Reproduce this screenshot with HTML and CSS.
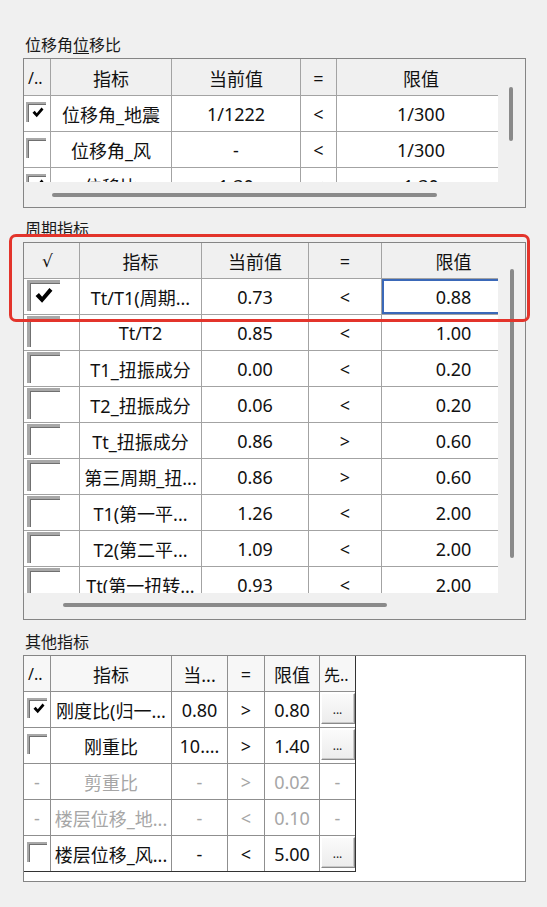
FILE: index.html
```html
<!DOCTYPE html>
<html lang="zh-CN">
<head>
<meta charset="utf-8">
<title>指标</title>
<link rel="stylesheet" href="styles.css">
</head>
<body>
<section class="group">
  <div class="title">位移角<span class="ul">位</span>移比</div>
  <div class="box box1">
    <div class="main t1">
      <div class="row head">
        <div class="c left">/..</div><div class="c">指标</div><div class="c">当前值</div><div class="c">=</div><div class="c">限值</div>
      </div>
      <div class="body">
        <div class="row">
          <div class="c cbc"><div class="cb"><svg width="12" height="11" viewBox="0 0 16 15"><path d="M0.5 8 L3.5 5.2 L6.3 8.6 L12.8 0.8 L15.5 3.3 L6.3 14 Z" fill="#000"/></svg></div></div>
          <div class="c">位移角_地震</div><div class="c">1/1222</div><div class="c">&lt;</div><div class="c">1/300</div>
        </div>
        <div class="row">
          <div class="c cbc"><div class="cb"></div></div>
          <div class="c">位移角_风</div><div class="c">-</div><div class="c">&lt;</div><div class="c">1/300</div>
        </div>
        <div class="row">
          <div class="c cbc"><div class="cb"><svg width="12" height="11" viewBox="0 0 16 15"><path d="M0.5 8 L3.5 5.2 L6.3 8.6 L12.8 0.8 L15.5 3.3 L6.3 14 Z" fill="#000"/></svg></div></div>
          <div class="c">位移比</div><div class="c">1.30</div><div class="c">&lt;</div><div class="c">1.30</div>
        </div>
      </div>
    </div>
    <div class="vscroll"><div class="thumb v1"></div></div>
    <div class="hscroll"><div class="thumb h1"></div></div>
  </div>
</section>

<section class="group g2">
  <div class="title">周期指标</div>
  <div class="box box2">
    <div class="main t2">
      <div class="row head">
        <div class="c root">√</div><div class="c">指标</div><div class="c">当前值</div><div class="c">=</div><div class="c">限值</div>
      </div>
      <div class="body">
        <div class="row">
          <div class="c cbc"><div class="cb big"><svg width="18" height="17" viewBox="0 0 16 15"><path d="M0.5 8 L3.5 5.2 L6.3 8.6 L12.8 0.8 L15.5 3.3 L6.3 14 Z" fill="#000"/></svg></div></div>
          <div class="c">Tt/T1(周期...</div><div class="c">0.73</div><div class="c">&lt;</div><div class="c focus">0.88</div>
        </div>
        <div class="row">
          <div class="c cbc"><div class="cb big"></div></div>
          <div class="c">Tt/T2</div><div class="c">0.85</div><div class="c">&lt;</div><div class="c">1.00</div>
        </div>
        <div class="row">
          <div class="c cbc"><div class="cb big"></div></div>
          <div class="c">T1_扭振成分</div><div class="c">0.00</div><div class="c">&lt;</div><div class="c">0.20</div>
        </div>
        <div class="row">
          <div class="c cbc"><div class="cb big"></div></div>
          <div class="c">T2_扭振成分</div><div class="c">0.06</div><div class="c">&lt;</div><div class="c">0.20</div>
        </div>
        <div class="row">
          <div class="c cbc"><div class="cb big"></div></div>
          <div class="c">Tt_扭振成分</div><div class="c">0.86</div><div class="c">&gt;</div><div class="c">0.60</div>
        </div>
        <div class="row">
          <div class="c cbc"><div class="cb big"></div></div>
          <div class="c">第三周期_扭...</div><div class="c">0.86</div><div class="c">&gt;</div><div class="c">0.60</div>
        </div>
        <div class="row">
          <div class="c cbc"><div class="cb big"></div></div>
          <div class="c">T1(第一平...</div><div class="c">1.26</div><div class="c">&lt;</div><div class="c">2.00</div>
        </div>
        <div class="row">
          <div class="c cbc"><div class="cb big"></div></div>
          <div class="c">T2(第二平...</div><div class="c">1.09</div><div class="c">&lt;</div><div class="c">2.00</div>
        </div>
        <div class="row">
          <div class="c cbc"><div class="cb big"></div></div>
          <div class="c">Tt(第一扭转...</div><div class="c">0.93</div><div class="c">&lt;</div><div class="c">2.00</div>
        </div>
      </div>
    </div>
    <div class="vscroll"><div class="thumb v2"></div></div>
    <div class="hscroll"><div class="thumb h2"></div></div>
  </div>
</section>

<section class="group g3">
  <div class="title">其他指标</div>
  <div class="box box3">
    <div class="t3">
      <div class="row head">
        <div class="c left">/..</div><div class="c">指标</div><div class="c">当...</div><div class="c">=</div><div class="c">限值</div><div class="c left">先..</div>
      </div>
      <div class="row">
        <div class="c cbc"><div class="cb"><svg width="12" height="11" viewBox="0 0 16 15"><path d="M0.5 8 L3.5 5.2 L6.3 8.6 L12.8 0.8 L15.5 3.3 L6.3 14 Z" fill="#000"/></svg></div></div>
        <div class="c">刚度比(归一...</div><div class="c">0.80</div><div class="c">&gt;</div><div class="c">0.80</div><div class="c btnc"><div class="btn">...</div></div>
      </div>
      <div class="row">
        <div class="c cbc"><div class="cb"></div></div>
        <div class="c">刚重比</div><div class="c">10....</div><div class="c">&gt;</div><div class="c">1.40</div><div class="c btnc"><div class="btn">...</div></div>
      </div>
      <div class="row dis">
        <div class="c">-</div>
        <div class="c">剪重比</div><div class="c">-</div><div class="c">&gt;</div><div class="c">0.02</div><div class="c">-</div>
      </div>
      <div class="row dis">
        <div class="c">-</div>
        <div class="c">楼层位移_地...</div><div class="c">-</div><div class="c">&lt;</div><div class="c">0.10</div><div class="c">-</div>
      </div>
      <div class="row last">
        <div class="c cbc"><div class="cb"></div></div>
        <div class="c">楼层位移_风...</div><div class="c">-</div><div class="c">&lt;</div><div class="c">5.00</div><div class="c btnc"><div class="btn">...</div></div>
      </div>
    </div>
  </div>
</section>

<div class="mark"></div>
</body>
</html>
```

FILE: styles.css
```css
* { box-sizing: border-box; }

html, body { margin: 0; }

body {
  background: #f0f0f0;
  padding: 33px 21px 0 23px;
  font-family: "Noto Sans", "Noto Sans CJK SC", sans-serif;
  color: #111;
  width: 547px;
  height: 907px;
  overflow: hidden;
}

.title {
  height: 22px;
  line-height: 22px;
  font-family: "Noto Sans CJK SC", sans-serif;
  font-size: 16px;
  padding-left: 2px;
  margin-bottom: 3px;
  color: #1a1a1a;
}

.ul { text-decoration: underline; text-underline-offset: 2px; }

.g2 { margin-top: 9px; }
.g3 { margin-top: 10px; }

.box {
  border: 1px solid #858585;
  background: #f0f0f0;
  display: grid;
  grid-template-columns: 474px 1fr;
  overflow: hidden;
}

.box1 { height: 150px; grid-template-rows: 123px 1fr; }
.box2 { height: 378px; grid-template-rows: 350px 1fr; }
.box3 { height: 227px; background: #fff; display: block; }

.main { overflow: hidden; display: flex; flex-direction: column; }
.body { background: #fff; flex: 1; overflow: hidden; }

.row { display: grid; height: 36px; border-bottom: 1px solid #a3a3a3; }
.t1 .row { grid-template-columns: 27px 121px 129px 36px 169px; width: 482px; }
.t1 .head { height: 37px; }
.t2 .row { grid-template-columns: 56px 122px 107px 73px 144px; width: 502px; }
.t3 .row { grid-template-columns: 27px 121px 56px 37px 55px 35px; width: 331px; border-bottom-color: #8f8f8f; }
.t3 .row.last { border-bottom-color: #333; }
.t3 { border-right: 1px solid #333; width: 332px; }

.head { background: #f0f0f0; }
.t3 .head { background: #f7f7f7; }

.c {
  border-right: 1px solid #a3a3a3;
  display: flex;
  align-items: center;
  justify-content: center;
  font-size: 18px;
  white-space: nowrap;
  overflow: hidden;
  padding-top: 1px;
}
.t3 .c { border-right-color: #8f8f8f; }
.t3 .c:last-child { border-right: none; }

.c.left { justify-content: flex-start; padding-left: 4px; font-size: 16px; }
.c.root { font-family: "DejaVu Sans", sans-serif; font-size: 17px; padding-right: 8px; }

.cbc { align-items: flex-start; justify-content: flex-start; padding: 6px 0 0 2px; }
.t2 .cbc { padding: 1px 0 0 3px; }
.t3 .cbc { padding: 6px 0 0 3px; }

.cb {
  width: 20px;
  height: 20px;
  background: #fff;
  border-top: 2px solid #a8a8a8;
  border-left: 2px solid #a8a8a8;
  box-shadow: inset 1px 1px 0 #707070;
  display: flex;
  align-items: center;
  justify-content: center;
  padding: 0 0 2px 1px;
}
.cb.big {
  width: 33px;
  height: 31px;
  border-top-width: 3px;
  border-left-width: 3px;
  padding: 0 2px 3px 0;
}

.focus { box-shadow: inset 0 0 0 2px #3a68b8; }

.dis .c { color: #a6a6a6; }

.btnc { align-items: flex-start; padding: 1px 0 0 0; }
.btn {
  width: 34px;
  height: 31px;
  background: linear-gradient(#fbfbfb, #ececec);
  border: 1px solid;
  border-color: #ffffff #8a8a8a #8a8a8a #ffffff;
  box-shadow: inset -1px -1px 0 #c8c8c8;
  font-size: 12px;
  line-height: 12px;
  display: flex;
  align-items: flex-end;
  justify-content: center;
  padding-bottom: 7px;
  color: #222;
}

.vscroll { grid-row: 1; grid-column: 2; }
.hscroll { grid-row: 2; grid-column: 1 / 3; }

.thumb { background: #8a8a8a; border-radius: 2px; }
.v1 { width: 4px; height: 54px; margin: 28px 0 0 11px; }
.h1 { height: 4px; width: 385px; margin: 11px 0 0 28px; }
.v2 { width: 4px; height: 289px; margin: 26px 0 0 12px; }
.h2 { height: 4px; width: 324px; margin: 10px 0 0 39px; }

.mark {
  position: absolute;
  left: 9px;
  top: 234px;
  width: 521px;
  height: 88px;
  border: 3px solid #e3342b;
  border-radius: 7px;
}
```
